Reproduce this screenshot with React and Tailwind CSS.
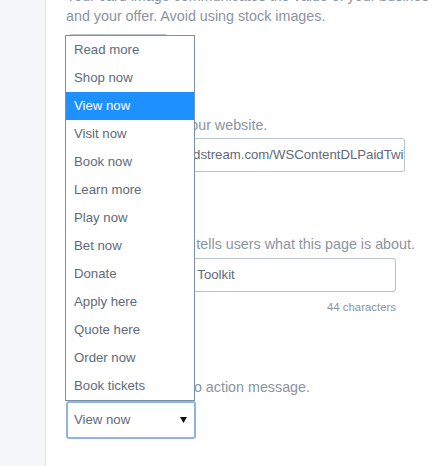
import React from 'react';

const options = [
  'Read more',
  'Shop now',
  'View now',
  'Visit now',
  'Book now',
  'Learn more',
  'Play now',
  'Bet now',
  'Donate',
  'Apply here',
  'Quote here',
  'Order now',
  'Book tickets',
];

export default function App() {
  const selected = 'View now';

  return (
    <div className="relative flex h-[466px] w-[430px] overflow-hidden bg-white font-['Liberation_Sans',Arial,sans-serif]">
      <div className="w-[46px] shrink-0 border-r border-[#e3e8ee] bg-[#f5f7fa]" />

      <div className="flex flex-col pl-[20px]">
        <p className="-mt-[14px] w-[382px] text-[14.3px] leading-[20px] text-[#8a949f]">
          Your card image communicates the value of your business and your offer. Avoid using stock images.
        </p>

        <div className="mt-[8px] ml-[2px] h-[32px] w-[100px] rounded-[3px] border border-[#b7c2ce]" />

        <label className="mt-[49px] text-[14.3px] leading-[20px] text-[#8a949f]">Paste the URL for your website.</label>
        <div className="mt-[3px] flex h-[34px] w-[339px] items-center overflow-hidden whitespace-nowrap rounded-[3px] border border-[#b7c2ce] pl-[11px] text-[13.2px] text-[#5e6a78]">
          https://business.windstream.com/WSContentDLPaidTwitter
        </div>

        <label className="mt-[62px] whitespace-nowrap text-[14.3px] leading-[20px] text-[#8a949f]">
          A brief headline that tells users what this page is about.
        </label>
        <div className="w-[330px]">
          <div className="mt-[4px] flex h-[34px] items-center overflow-hidden whitespace-nowrap rounded-[3px] border border-[#b7c2ce] pl-[6px] text-[13.2px] text-[#5e6a78]">
            Free Small Business Toolkit
          </div>
          <div className="mt-[8px] text-right text-[11.4px] leading-[14px] text-[#8a949f]">44 characters</div>
        </div>

        <label className="mt-[63px] text-[14.3px] leading-[20px] text-[#8a949f]">
          Select the best call to action message.
        </label>
        <div className="mt-[4px] flex h-[38px] w-[130px] items-center justify-between rounded-[3px] border-2 border-[#8fb3e8] pl-[6px] pr-[6px] text-[13.2px] text-[#5e6a78]">
          <span>{selected}</span>
          <svg width="7" height="6" viewBox="0 0 7 6" className="mr-[1px]">
            <polygon points="0,0 7,0 3.5,6" fill="#111" />
          </svg>
        </div>
      </div>

      <ul className="absolute left-[65px] top-[35px] w-[130px] border border-[#7b8fa6] bg-white text-[13.2px]">
        {options.map((o) => (
          <li
            key={o}
            className={
              o === selected
                ? 'flex h-[28px] items-center bg-[#1e90ff] pl-[8px] text-white'
                : 'flex h-[28px] items-center pl-[8px] text-[#5e6a78]'
            }
          >
            {o}
          </li>
        ))}
      </ul>
    </div>
  );
}
